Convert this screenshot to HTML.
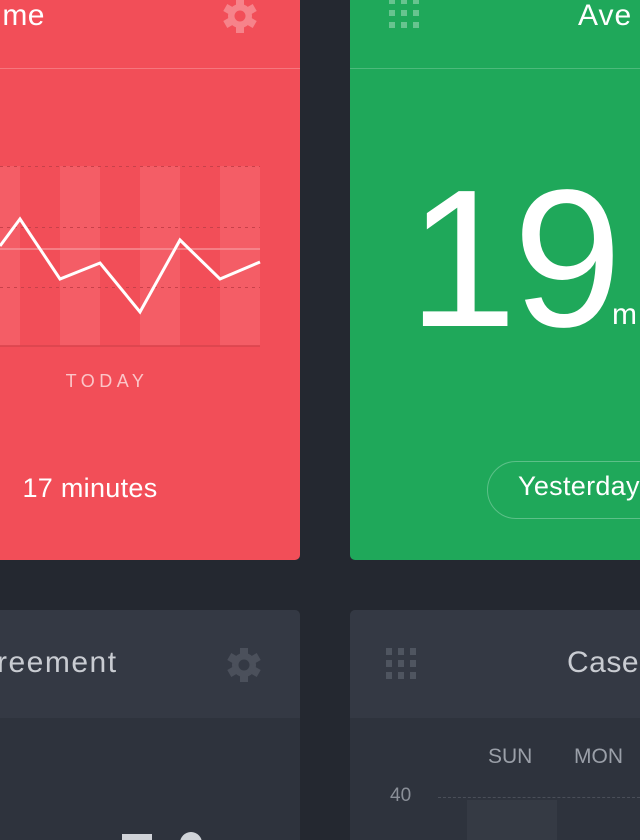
<!DOCTYPE html>
<html><head><style>
*{margin:0;padding:0;box-sizing:border-box}
html,body{width:640px;height:840px;overflow:hidden}
body{background:#242830;position:relative;font-family:"Liberation Sans",sans-serif;color:#fff}
.abs{position:absolute}
</style></head><body>
<div class="abs" style="left:0;top:0;width:300px;height:560px;background:#f24e58;border-radius:0 0 5px 0"></div>
<div class="abs" style="right:595px;top:-2px;font-size:30px;line-height:36px;letter-spacing:0.5px">me</div>
<svg class="abs" style="left:220px;top:-4px" width="40" height="40" viewBox="0 0 40 40"><g fill="#f6838a"><circle cx="20" cy="20" r="12"/><rect x="16" y="3" width="8" height="34"/><rect x="16" y="3" width="8" height="34" transform="rotate(60 20 20)"/><rect x="16" y="3" width="8" height="34" transform="rotate(120 20 20)"/></g><circle cx="20" cy="20" r="5.5" fill="#f24e58"/></svg>
<div class="abs" style="left:0;top:68px;width:300px;height:1px;background:#f5777e"></div>
<svg class="abs" style="left:0;top:160px" width="300" height="200">
<g fill="#f45d66"><rect x="0" y="6" width="20" height="180"/><rect x="60" y="6" width="40" height="180"/><rect x="140" y="6" width="40" height="180"/><rect x="220" y="6" width="40" height="180"/></g>
<g stroke="#c8414a" stroke-dasharray="3 4" stroke-width="1"><line x1="0" y1="6.5" x2="260" y2="6.5"/><line x1="0" y1="67.5" x2="260" y2="67.5"/><line x1="0" y1="127.5" x2="260" y2="127.5"/></g>
<line x1="0" y1="89" x2="260" y2="89" stroke="#f79aa0" stroke-width="1.2"/>
<line x1="0" y1="186" x2="260" y2="186" stroke="#d8434c" stroke-width="1.5"/>
<polyline points="0,86 20,59 60,119 100,103 140,152 180,80 220,119 260,102" fill="none" stroke="#fff" stroke-width="3" stroke-linejoin="miter"/>
</svg>
<div class="abs" style="left:0;top:371px;width:214px;text-align:center;font-size:18px;letter-spacing:4.5px;color:#fbc5c8">TODAY</div>
<div class="abs" style="left:0;top:473px;width:180px;text-align:center;font-size:27px;letter-spacing:0.3px">17 minutes</div>
<div class="abs" style="left:350px;top:0;width:300px;height:560px;background:#1fa85a;border-radius:0 0 0 5px"></div>
<svg class="abs" style="left:389px;top:-2px" width="34" height="34"><g fill="#67c48f"><rect x="0" y="0" width="6" height="6"/><rect x="12" y="0" width="6" height="6"/><rect x="24" y="0" width="6" height="6"/><rect x="0" y="12" width="6" height="6"/><rect x="12" y="12" width="6" height="6"/><rect x="24" y="12" width="6" height="6"/><rect x="0" y="24" width="6" height="6"/><rect x="12" y="24" width="6" height="6"/><rect x="24" y="24" width="6" height="6"/></g></svg>
<div class="abs" style="left:578px;top:-2px;font-size:30px;line-height:36px;letter-spacing:1px">Ave</div>
<div class="abs" style="left:350px;top:68px;width:300px;height:1px;background:#4cba7b"></div>
<div class="abs" style="left:408px;top:159px;font-size:196px;line-height:200px;letter-spacing:-4px">19</div>
<div class="abs" style="left:612px;top:298px;font-size:30px">m</div>
<div class="abs" style="left:487px;top:461px;width:200px;height:58px;border:1.5px solid #5cc088;border-radius:29px"></div>
<div class="abs" style="left:518px;top:471px;font-size:27px;letter-spacing:0.3px">Yesterday</div>
<div class="abs" style="left:0;top:610px;width:300px;height:230px;background:#2e333d;border-radius:0 5px 0 0"></div>
<div class="abs" style="left:0;top:610px;width:300px;height:108px;background:#343944;border-radius:0 5px 0 0"></div>
<div class="abs" style="left:-3px;top:646px;font-size:30px;color:#c9ccd2;letter-spacing:1.5px">reement</div>
<svg class="abs" style="left:224px;top:645px" width="40" height="40" viewBox="0 0 40 40"><g fill="#4b505b"><circle cx="20" cy="20" r="12"/><rect x="16" y="3" width="8" height="34"/><rect x="16" y="3" width="8" height="34" transform="rotate(60 20 20)"/><rect x="16" y="3" width="8" height="34" transform="rotate(120 20 20)"/></g><circle cx="20" cy="20" r="5.5" fill="#343944"/></svg>
<div class="abs" style="left:122px;top:834px;width:30px;height:6px;background:#d0d3d8"></div>
<div class="abs" style="left:180px;top:832px;width:22px;height:22px;border-radius:50%;background:#d0d3d8"></div>
<div class="abs" style="left:350px;top:610px;width:290px;height:230px;background:#2e333d;border-radius:5px 0 0 0"></div>
<div class="abs" style="left:350px;top:610px;width:290px;height:108px;background:#343944;border-radius:5px 0 0 0"></div>
<svg class="abs" style="left:386px;top:648px" width="34" height="34"><g fill="#4f5560"><rect x="0" y="0" width="6" height="7"/><rect x="12" y="0" width="6" height="7"/><rect x="24" y="0" width="6" height="7"/><rect x="0" y="12" width="6" height="7"/><rect x="12" y="12" width="6" height="7"/><rect x="24" y="12" width="6" height="7"/><rect x="0" y="24" width="6" height="7"/><rect x="12" y="24" width="6" height="7"/><rect x="24" y="24" width="6" height="7"/></g></svg>
<div class="abs" style="left:567px;top:646px;font-size:30px;color:#c9ccd2;letter-spacing:0.5px">Case</div>
<div class="abs" style="left:488px;top:745px;font-size:21px;color:#9a9fa8">SUN</div>
<div class="abs" style="left:574px;top:745px;font-size:21px;color:#9a9fa8">MON</div>
<div class="abs" style="left:390px;top:785px;font-size:19px;color:#8a8f98">40</div>
<div class="abs" style="left:467px;top:800px;width:90px;height:40px;background:#353a44"></div>
<div class="abs" style="left:438px;top:797px;width:202px;border-top:1px dashed #4a4f59"></div>
</body></html>
